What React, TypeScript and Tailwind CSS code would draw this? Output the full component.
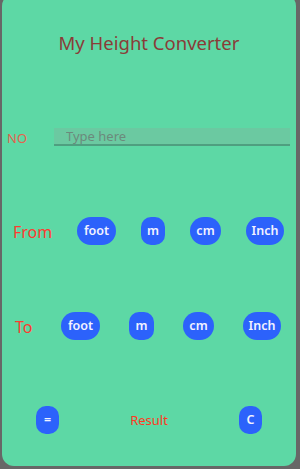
const font = { fontFamily: '"Noto Sans", "Open Sans", sans-serif' }

function Pill({ label, w, round = 'rounded-[14px]' }: { label: string; w: string; round?: string }) {
  return (
    <button
      className={`flex h-[28px] shrink-0 items-center justify-center bg-[#2c62fb] text-[12.5px] font-semibold text-[#f2f2ff] ${w} ${round}`}
    >
      {label}
    </button>
  )
}

export default function App() {
  return (
    <div className="h-[469px] w-[300px] overflow-hidden bg-[#676767] pl-[2px] pr-[4px]" style={font}>
      <div className="-mt-[6px] flex h-[472px] flex-col rounded-[12px] bg-[#5dd8a5]">
        <h1 className="mt-[37px] h-[24px] text-center text-[18.5px] leading-[24px] text-[#8a3c38]">
          My Height Converter
        </h1>

        <div className="mt-[73px] flex h-[18px] items-center">
          <span className="w-[52px] pl-[5px] pt-[4px] text-[13px] text-[#e4624e]">NO</span>
          <input
            placeholder="Type here"
            className="h-[18px] w-[236px] border-b-2 border-[#4f9f80] bg-[#6bc9a1] pl-[12px] text-[13px] leading-[16px] outline-none placeholder:text-[#6b8a7c]"
          />
        </div>

        <div className="mt-[71px] flex h-[28px] items-center">
          <span className="w-[75px] pl-[11px] pt-[2px] text-[16px] text-[#ff3a30]">From</span>
          <div className="flex gap-[25px]">
            <Pill label="foot" w="w-[39px]" />
            <Pill label="m" w="w-[24px]" round="rounded-[10px]" />
            <Pill label="cm" w="w-[31px]" />
            <Pill label="Inch" w="w-[38px]" />
          </div>
        </div>

        <div className="mt-[67px] flex h-[28px] items-center">
          <span className="w-[59px] pl-[13px] pt-[2px] text-[16px] text-[#ff3a30]">To</span>
          <div className="flex gap-[29px]">
            <Pill label="foot" w="w-[39px]" />
            <Pill label="m" w="w-[25px]" round="rounded-[10px]" />
            <Pill label="cm" w="w-[31px]" />
            <Pill label="Inch" w="w-[38px]" />
          </div>
        </div>

        <div className="mt-[66px] flex h-[28px] items-center">
          <div className="w-[34px]" />
          <Pill label="=" w="w-[23px]" round="rounded-[10px]" />
          <span className="flex-1 pt-[2px] text-center text-[13px] text-[#ff3a22]">Result</span>
          <Pill label="C" w="w-[23px]" round="rounded-[10px]" />
          <div className="w-[34px]" />
        </div>
      </div>
    </div>
  )
}
